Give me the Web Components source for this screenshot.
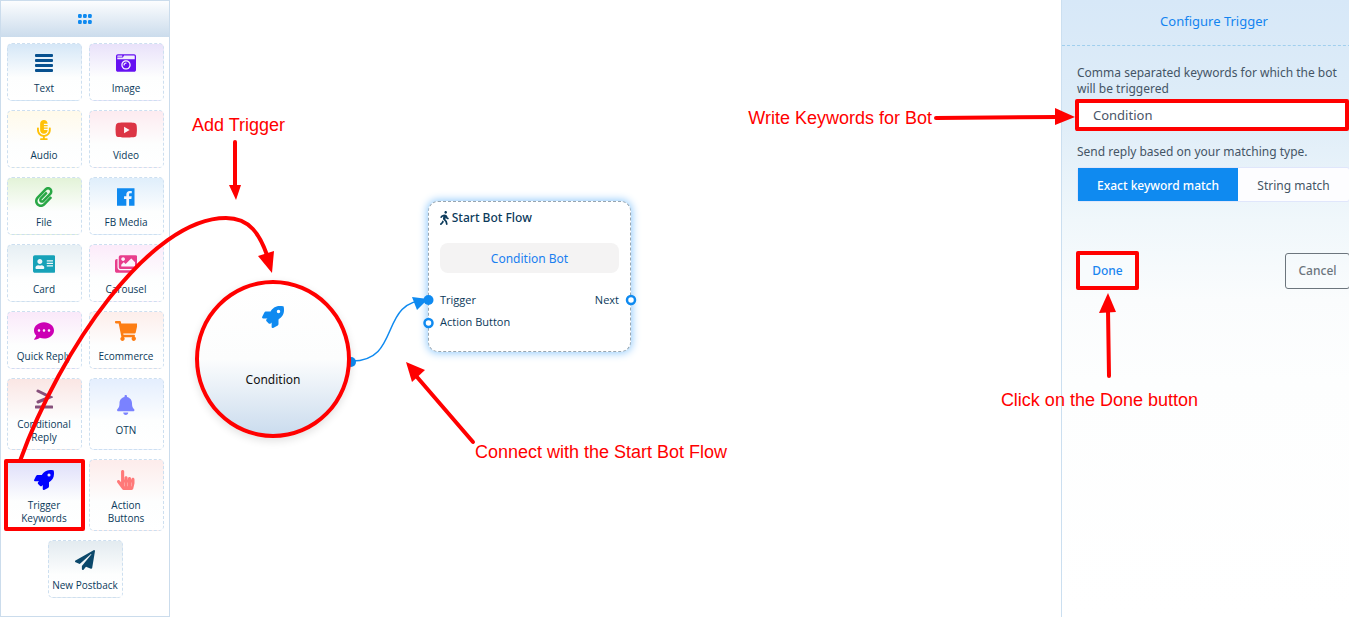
<!DOCTYPE html>
<html lang="en">
<head>
<meta charset="utf-8">
<title>Bot Flow Builder</title>
<style>
  body { margin: 0; background: #fff; font-family: "Noto Sans", "Open Sans", sans-serif; font-size: 12px; color: #0b3a5b; }
</style>
</head>
<body>
<flow-builder></flow-builder>
<script>
const ICONS = {
  grid: ['0 0 44 32', '<rect width="12" height="13" rx="4"/><rect x="16" width="12" height="13" rx="4"/><rect x="32" width="12" height="13" rx="4"/><rect y="19" width="12" height="13" rx="4"/><rect x="16" y="19" width="12" height="13" rx="4"/><rect x="32" y="19" width="12" height="13" rx="4"/>'],
  text: ['0 0 18 20', '<rect y="1" width="18" height="3" rx="1"/><rect y="6" width="18" height="3" rx="1"/><rect y="11" width="18" height="3" rx="1"/><rect y="16" width="18" height="3" rx="1"/>'],
  image: ['0 0 512 512', '<path d="M48 32C21.5 32 0 53.5 0 80v352c0 26.5 21.5 48 48 48h416c26.5 0 48-21.5 48-48V80c0-26.5-21.5-48-48-48H48zm0 32h106c3.3 0 6 2.7 6 6v20c0 3.3-2.7 6-6 6H38c-3.3 0-6-2.7-6-6V80c0-8.8 7.2-16 16-16zm426 96H38c-3.3 0-6-2.7-6-6v-36c0-3.3 2.7-6 6-6h138l30.2-45.3c1.1-1.7 3-2.7 5-2.7H464c8.8 0 16 7.2 16 16v74c0 3.3-2.7 6-6 6zM256 424c-66.2 0-120-53.8-120-120s53.8-120 120-120 120 53.8 120 120-53.8 120-120 120zm0-208c-48.5 0-88 39.5-88 88s39.5 88 88 88 88-39.5 88-88-39.5-88-88-88zm-48 104c-8.8 0-16-7.2-16-16 0-35.3 28.7-64 64-64 8.8 0 16 7.2 16 16s-7.2 16-16 16c-17.6 0-32 14.4-32 32 0 8.8-7.2 16-16 16z"/>'],
  mic: ['0 0 352 512', '<path d="M336 192h-16c-8.84 0-16 7.16-16 16v48c0 74.8-64.49 134.82-140.79 127.38C96.71 376.89 48 317.11 48 250.3V208c0-8.84-7.16-16-16-16H16c-8.84 0-16 7.16-16 16v40.16c0 89.64 63.97 169.55 152 181.69V464H96c-8.84 0-16 7.16-16 16v16c0 8.84 7.16 16 16 16h160c8.84 0 16-7.16 16-16v-16c0-8.84-7.16-16-16-16h-56v-33.77C285.71 418.47 352 344.9 352 256v-48c0-8.84-7.16-16-16-16zM176 352c53.02 0 96-42.98 96-96h-85.33c-5.89 0-10.67-3.58-10.67-8v-16c0-4.42 4.78-8 10.67-8H272v-32h-85.33c-5.89 0-10.67-3.58-10.67-8v-16c0-4.42 4.78-8 10.67-8H272v-32h-85.33c-5.89 0-10.67-3.58-10.67-8v-16c0-4.42 4.78-8 10.67-8H272c0-53.02-42.98-96-96-96S80 42.98 80 96v160c0 53.02 42.98 96 96 96z"/>'],
  video: ['0 0 576 512', '<path d="M549.655 124.083c-6.281-23.65-24.787-42.276-48.284-48.597C458.781 64 288 64 288 64S117.22 64 74.629 75.486c-23.497 6.322-42.003 24.947-48.284 48.597-11.412 42.867-11.412 132.305-11.412 132.305s0 89.438 11.412 132.305c6.281 23.65 24.787 41.5 48.284 47.821C117.22 448 288 448 288 448s170.78 0 213.371-11.486c23.497-6.321 42.003-24.171 48.284-47.821 11.412-42.867 11.412-132.305 11.412-132.305s0-89.438-11.412-132.305zm-317.51 213.508V175.185l142.739 81.205-142.739 81.201z"/>'],
  clip: ['0 0 448 512', '<path d="M43.246 466.142c-58.43-60.289-57.341-157.511 1.386-217.581L254.392 34c44.316-45.332 116.351-45.336 160.671 0 43.89 44.894 43.943 117.329 0 162.276L232.214 383.128c-29.855 30.537-78.633 30.111-107.982-.998-28.275-29.97-27.368-77.473 1.452-106.953l143.743-146.835c6.182-6.314 16.312-6.422 22.626-.241l22.861 22.379c6.315 6.182 6.422 16.312.241 22.626L171.427 319.927c-4.932 5.045-5.236 13.428-.648 18.292 4.372 4.634 11.245 4.711 15.688.165l182.849-186.851c19.613-20.062 19.613-52.725-.011-72.798-19.189-19.627-49.957-19.637-69.154 0L90.39 293.295c-34.763 35.56-35.299 93.12-1.191 128.313 34.01 35.093 88.985 35.137 123.058.286l172.06-175.999c6.177-6.319 16.307-6.433 22.626-.256l22.877 22.364c6.319 6.177 6.434 16.307.256 22.626l-172.06 175.998c-59.576 60.938-155.943 60.216-214.77-.485z"/>'],
  facebook: ['0 0 448 512', '<path d="M448 40v432c0 5-3 8-8 8H309.1V306.5h58.2l8.7-67.6h-67v-43.2c0-19.6 5.4-32.9 33.5-32.9h35.8v-60.5c-6.2-.8-27.4-2.7-52.2-2.7-51.6 0-87 31.5-87 89.4v49.9h-58.4v67.6h58.4V480H8c-5 0-8-3-8-8V40c0-5 3-8 8-8h432c5 0 8 3 8 8z"/>'],
  card: ['0 0 576 512', '<path d="M528 32H48C21.5 32 0 53.5 0 80v352c0 26.5 21.5 48 48 48h480c26.5 0 48-21.5 48-48V80c0-26.5-21.5-48-48-48zm-352 96c35.3 0 64 28.7 64 64s-28.7 64-64 64-64-28.7-64-64 28.7-64 64-64zm112 236.8c0 10.6-10 19.2-22.4 19.2H86.4C74 384 64 375.4 64 364.8v-19.2c0-31.8 30.1-57.6 67.2-57.6h5c12.3 5.1 25.7 8 39.8 8s27.6-2.9 39.8-8h5c37.1 0 67.2 25.8 67.2 57.6v19.2zM512 312c0 4.4-3.6 8-8 8H360c-4.4 0-8-3.6-8-8v-16c0-4.4 3.6-8 8-8h144c4.4 0 8 3.6 8 8v16zm0-64c0 4.4-3.6 8-8 8H360c-4.4 0-8-3.6-8-8v-16c0-4.4 3.6-8 8-8h144c4.4 0 8 3.6 8 8v16zm0-64c0 4.4-3.6 8-8 8H360c-4.4 0-8-3.6-8-8v-16c0-4.4 3.6-8 8-8h144c4.4 0 8 3.6 8 8v16z"/>'],
  images: ['0 0 576 512', '<path d="M480 416v16c0 26.51-21.49 48-48 48H48c-26.51 0-48-21.49-48-48V176c0-26.51 21.49-48 48-48h16v208c0 44.112 35.888 80 80 80h336zm96-80V80c0-26.51-21.49-48-48-48H144c-26.51 0-48 21.49-48 48v256c0 26.51 21.49 48 48 48h384c26.51 0 48-21.49 48-48zM256 128c0 26.51-21.49 48-48 48s-48-21.49-48-48 21.49-48 48-48 48 21.49 48 48zm-96 144l55.515-55.515c4.686-4.686 12.284-4.686 16.971 0L272 256l135.515-135.515c4.686-4.686 12.284-4.686 16.971 0L512 208v112H160v-48z"/>'],
  comment: ['0 0 512 512', '<path d="M256 32C114.6 32 0 125.1 0 240c0 49.6 21.4 95 57 130.7C44.5 421.1 2.7 466 2.2 466.5c-2.2 2.3-2.8 5.7-1.5 8.7S4.8 480 8 480c66.3 0 116-31.8 140.6-51.4 32.7 12.3 69 19.4 107.4 19.4 141.4 0 256-93.1 256-208S397.4 32 256 32zM128 272c-17.7 0-32-14.3-32-32s14.3-32 32-32 32 14.3 32 32-14.3 32-32 32zm128 0c-17.7 0-32-14.3-32-32s14.3-32 32-32 32 14.3 32 32-14.3 32-32 32zm128 0c-17.7 0-32-14.3-32-32s14.3-32 32-32 32 14.3 32 32-14.3 32-32 32z"/>'],
  cart: ['0 0 576 512', '<path d="M528.12 301.319l47.273-208C578.806 78.301 567.391 64 551.99 64H159.208l-9.166-44.81C147.758 8.021 137.93 0 126.529 0H24C10.745 0 0 10.745 0 24v16c0 13.255 10.745 24 24 24h69.883l70.248 343.435C147.325 417.1 136 435.222 136 456c0 30.928 25.072 56 56 56s56-25.072 56-56c0-15.674-6.447-29.835-16.824-40h209.647C430.447 426.165 424 440.326 424 456c0 30.928 25.072 56 56 56s56-25.072 56-56c0-22.172-12.888-41.332-31.579-50.405l5.517-24.276c3.413-15.018-8.002-29.319-23.403-29.319H218.117l-6.545-32h293.145c11.206 0 20.92-7.754 23.403-18.681z"/>'],
  gte: ['0 0 18 20', '<path d="M3 2l12 6-12 5M1 18h16" fill="none" stroke="currentColor" stroke-width="3" stroke-linecap="round"/>'],
  bell: ['0 0 448 512', '<path d="M224 512c35.32 0 63.97-28.65 63.97-64H160.03c0 35.35 28.65 64 63.97 64zm215.39-149.71c-19.32-20.76-55.47-51.99-55.47-154.29 0-77.7-54.48-139.9-127.94-155.16V32c0-17.67-14.32-32-31.98-32s-31.98 14.33-31.98 32v20.84C118.56 68.1 64.08 130.3 64.08 208c0 102.3-36.15 133.53-55.47 154.29-6 6.45-8.66 14.16-8.61 21.71.11 16.4 12.98 32 32.1 32h383.8c19.12 0 32-15.6 32.1-32 .05-7.55-2.61-15.27-8.61-21.71z"/>'],
  rocket: ['0 0 512 512', '<path d="M505.12 19.094c-1.19-5.531-6.658-11-12.207-12.188C460.716 0 435.507 0 410.407 0 307.175 0 245.27 55.203 199.052 128H94.838c-16.348.016-35.557 11.875-42.887 26.484L2.516 253.297A28.4 28.4 0 0 0 0 264a24.009 24.009 0 0 0 24.006 24h103.81l-22.474 22.469c-11.365 11.361-12.996 32.258 0 45.25l50.904 50.906c11.156 11.188 32.156 13.156 45.277 0l22.475-22.469V488a24.009 24.009 0 0 0 24.006 24 28.559 28.559 0 0 0 10.707-2.516l98.728-49.39c14.629-7.297 26.508-26.5 26.508-42.86v-104.437c72.597-46.313 128.035-108.406 128.035-211.094.093-25.203.093-50.406-6.862-82.609zM384.04 168a40 40 0 1 1 40.01-40 40.023 40.023 0 0 1-40.01 40z"/>'],
  pointer: ['0 0 448 512', '<path d="M448 240v96c0 3.084-.356 6.159-1.063 9.162l-32 136C410.686 499.23 394.562 512 376 512H168a40.004 40.004 0 0 1-32.35-16.473l-127.997-176c-12.993-17.866-9.043-42.883 8.822-55.876 17.867-12.994 42.884-9.043 55.877 8.823L104 315.992V40c0-22.091 17.908-40 40-40s40 17.909 40 40v200h8v-40c0-22.091 17.908-40 40-40s40 17.909 40 40v40h8v-24c0-22.091 17.908-40 40-40s40 17.909 40 40v24h8c0-22.091 17.908-40 40-40s40 17.909 40 40zm-256 80h-8v96h8v-96zm88 0h-8v96h8v-96zm88 0h-8v96h8v-96z"/>'],
  plane: ['0 0 512 512', '<path d="M476 3.2L12.5 270.6c-18.1 10.4-15.8 35.6 2.2 43.2L121 358.4l287.3-253.2c5.5-4.9 13.3 2.6 8.6 8.3L176 407v80.5c0 23.6 28.5 32.9 42.5 15.8L282 426l124.6 52.2c14.2 6 30.4-2.9 33-18.2l72-432C515 7.8 493.3-6.8 476 3.2z"/>'],
  walking: ['0 0 320 512', '<path d="M208 96c26.5 0 48-21.5 48-48S234.5 0 208 0s-48 21.5-48 48 21.5 48 48 48zm94.5 149.1l-23.3-11.8-9.7-29.4c-14.7-44.6-55.7-75.8-102.2-75.9-36-.1-55.9 10.1-93.3 25.2-21.6 8.7-39.3 25.2-49.7 46.2L17.6 213c-7.8 15.8-1.5 35 14.2 42.9 15.6 7.9 34.6 1.5 42.5-14.3L81 228c3.5-7 9.3-12.5 16.5-15.4l26.8-10.8-15.2 60.7c-5.2 20.8.4 42.9 14.9 58.8l59.9 65.4c7.2 7.9 12.3 17.4 14.9 27.7l18.3 73.3c4.3 17.1 21.7 27.6 38.8 23.3 17.1-4.3 27.6-21.7 23.3-38.8l-22.2-89c-2.6-10.3-7.7-19.9-14.9-27.7l-45.5-49.7 17.2-68.7 5.5 16.5c5.3 16.1 16.7 29.4 31.7 37l23.3 11.8c15.6 7.9 34.6 1.5 42.5-14.3 7.7-15.7 1.4-35.1-14.3-43zM73.6 385.8c-3.2 8.1-8 15.4-14.2 21.5l-50 50.1c-12.5 12.5-12.5 32.8 0 45.3s32.7 12.5 45.2 0l59.4-59.4c6.1-6.1 10.9-13.4 14.2-21.5l13.5-33.8c-55.3-60.3-38.7-41.8-47.4-53.7l-20.7 51.5z"/>']
};

function define(name, html) {
  customElements.define(name, class extends HTMLElement {
    constructor() {
      super();
      this.attachShadow({ mode: 'open' }).innerHTML = html;
    }
  });
}

customElements.define('flow-icon', class extends HTMLElement {
  connectedCallback() {
    const [box, shapes] = ICONS[this.getAttribute('name')];
    const root = this.shadowRoot || this.attachShadow({ mode: 'open' });
    root.innerHTML = `<style>
      :host { display: flex; justify-content: center; height: 20px; }
      svg { height: 100%; display: block; fill: currentColor; }
    </style><svg viewBox="${box}" aria-hidden="true">${shapes}</svg>`;
  }
});

/* One draggable block type in the palette */
customElements.define('palette-tile', class extends HTMLElement {
  connectedCallback() {
    const root = this.shadowRoot || this.attachShadow({ mode: 'open' });
    root.innerHTML = `<style>
      :host { display: flex; width: 75px; }
      button { flex: 1; display: flex; flex-direction: column; align-items: center; justify-content: center; gap: 9px;
        box-sizing: border-box; min-height: 58px; margin: 0; padding: 9px 0 5px; border: 1px dashed #cddff0; border-radius: 5px;
        background: linear-gradient(var(--tint), #fdfefe 60%, #fff); font: inherit; font-size: 10px; line-height: 13px; color: #0b3a5b; white-space: nowrap; }
      :host([tall]) button { min-height: 72px; }
      :host([marked]) button { margin: 0 -3px; padding: 6px 0 2px; border: 4px solid #f00; border-radius: 2px; }
      flow-icon { color: var(--ink); }
    </style><button type="button"><flow-icon name="${this.getAttribute('icon')}"></flow-icon><span><slot></slot></span></button>`;
  }
});

define('block-palette', `<style>
  :host { display: block; box-sizing: border-box; width: 170px; border: 1px solid #cbdcec; background: #fff; font-family: "Open Sans", "Noto Sans", sans-serif; }
  header { display: flex; align-items: center; justify-content: center; height: 36px; background: linear-gradient(#fcfdfe, #cbdcec); color: #0f8af0; }
  header flow-icon { height: 10px; }
  nav { display: flex; flex-wrap: wrap; justify-content: center; gap: 9px 7px; padding: 6px 0 16px; }
</style>
<header><flow-icon name="grid"></flow-icon></header>
<nav aria-label="Blocks">
  <palette-tile icon="text" style="--tint:#d5e7f7;--ink:#07508f">Text</palette-tile>
  <palette-tile icon="image" style="--tint:#e9e2fa;--ink:#6610f2">Image</palette-tile>
  <palette-tile icon="mic" style="--tint:#fffaea;--ink:#ffc107">Audio</palette-tile>
  <palette-tile icon="video" style="--tint:#fdebf0;--ink:#dc3545">Video</palette-tile>
  <palette-tile icon="clip" style="--tint:#e3f3d8;--ink:#28a745">File</palette-tile>
  <palette-tile icon="facebook" style="--tint:#dfeefb;--ink:#0f8af0">FB Media</palette-tile>
  <palette-tile icon="card" style="--tint:#e6eff4;--ink:#17a2b8">Card</palette-tile>
  <palette-tile icon="images" style="--tint:#fcebfa;--ink:#e83e8c">Carousel</palette-tile>
  <palette-tile icon="comment" style="--tint:#fae9fa;--ink:#cc00b4">Quick Reply</palette-tile>
  <palette-tile icon="cart" style="--tint:#fdeeeb;--ink:#fd7e14">Ecommerce</palette-tile>
  <palette-tile tall icon="gte" style="--tint:#fae6e4;--ink:#87507b">Conditional<br>Reply</palette-tile>
  <palette-tile tall icon="bell" style="--tint:#e4eefe;--ink:#7a82ff">OTN</palette-tile>
  <palette-tile tall marked icon="rocket" style="--tint:#e0e0fa;--ink:#0000ff">Trigger<br>Keywords</palette-tile>
  <palette-tile tall icon="pointer" style="--tint:#fdeceb;--ink:#ff7979">Action<br>Buttons</palette-tile>
  <palette-tile icon="plane" style="--tint:#e3ebf0;--ink:#0b486b">New Postback</palette-tile>
</nav>`);

define('trigger-node', `<style>
  :host { display: flex; flex-direction: column; align-items: center; box-sizing: border-box; width: 156px; height: 158px;
    padding-top: 22px; border: 4px solid #f00; border-radius: 50%; background: linear-gradient(#fff, #fcfdfd 50%, #cbdcee);
    box-shadow: 0 3px 8px rgba(0,0,0,.12); color: #111; line-height: 18px; }
  flow-icon { height: 22px; margin-bottom: 43px; color: #0f8af0; }
</style><flow-icon name="rocket"></flow-icon><span><slot></slot></span>`);

define('start-node', `<style>
  :host { display: block; box-sizing: border-box; width: 203px; height: 151px; padding: 6px 11px; border: 1px dashed #98a6b0;
    border-radius: 10px; background: #fff; box-shadow: 0 0 8px 1px #8fc9fb; color: #0b3a5b; }
  h2 { display: flex; align-items: center; gap: 3px; margin: 0 0 15px; font-size: 12px; line-height: 20px; font-weight: 500; }
  h2 flow-icon { height: 14px; }
  .name { height: 30px; margin-bottom: 16px; border-radius: 8px; background: #f4f3f3; color: #1a7ff0; line-height: 32px; text-align: center; }
  .row { display: flex; justify-content: space-between; font-family: "Open Sans", "Noto Sans", sans-serif; font-size: 11px; line-height: 22px; }
</style>
<h2><flow-icon name="walking"></flow-icon>Start Bot Flow</h2>
<div class="name">Condition Bot</div>
<div class="row"><span>Trigger</span><span>Next</span></div>
<div class="row"><span>Action Button</span></div>`);

/* Free canvas: nodes sit at their own places, links are drawn between the ports */
define('flow-canvas', `<style>
  :host { display: block; position: relative; }
  trigger-node, start-node, svg { position: absolute; }
  trigger-node { left: 25px; top: 280px; }
  start-node { left: 258px; top: 201px; }
  svg { left: 0; top: 0; width: 480px; height: 460px; }
</style>
<start-node></start-node>
<svg viewBox="170 0 480 460" fill="none" stroke="#0f8af0" aria-hidden="true">
  <path d="M352 361C402 361 378 300 428 300" stroke-width="1.5"/>
  <path d="M412 297l16 2-11 11z" fill="#0f8af0" stroke="none"/>
  <circle cx="351" cy="362" r="5" fill="#0f8af0" stroke="none"/>
  <circle cx="428.500" cy="300" r="5" fill="#0f8af0" stroke="none"/>
  <circle cx="428.500" cy="323" r="4" fill="#fff" stroke-width="2.500"/>
  <circle cx="631" cy="300" r="4" fill="#fff" stroke-width="2.500"/>
</svg>
<trigger-node>Condition</trigger-node>`);

define('config-panel', `<style>
  :host { display: block; overflow: hidden; box-sizing: border-box; border-left: 1px solid #cbdff0;
    background: linear-gradient(#d7e8f8, #dfedf8 120px, #f0f7fb 220px, #fafcfd 300px, #fdfefe 380px, #fff); }
  .inner { width: 304px; color: #445566; }
  h1 { margin: 0; border-bottom: 1px dashed #a0cfee; font-size: 13px; font-weight: 400; line-height: 43px; padding-bottom: 2px; text-align: center; color: #1384f0; }
  form { padding: 19px 16px 19px 15px; }
  label.text, legend { display: block; padding: 0; font-size: 12px; line-height: 16px; }
  input[type=text] { display: block; box-sizing: border-box; width: 274px; height: 32px; margin: 2px 0 13px -2px; padding: 0 14px;
    border: 4px solid #f00; border-radius: 2px; background: #fff; font: inherit; font-size: 13px; color: #4a5568; outline: 0; }
  fieldset { margin: 0 0 49px; padding: 0; border: 0; }
  .segments { display: flex; margin-top: 7px; border: 1px solid #e0e6fb; border-radius: 3px; background: #fdfdff; }
  .segments label { flex: 0 0 160px; line-height: 35px; height: 33px; text-align: center; }
  .segments label + label { flex: 1; }
  .segments label:has(:checked) { background: #0f8af0; color: #fff; font-weight: 500; }
  input[type=radio] { position: absolute; opacity: 0; margin: 0; }
  .actions { display: flex; justify-content: space-between; align-items: center; margin-left: -1px; }
  button { box-sizing: border-box; height: 36px; width: 65px; padding: 0; border: 1px solid #6c757d; border-radius: 3px; background: none;
    font: inherit; font-size: 12px; font-weight: 500; color: #6c757d; }
  button.done { height: 39px; width: 63px; border: 4px solid #f00; border-radius: 2px; background: #f8fbfd; color: #1a85f0; }
</style>
<div class="inner">
  <h1>Configure Trigger</h1>
  <form>
    <label class="text" for="keywords">Comma separated keywords for which the bot will be triggered</label>
    <input type="text" id="keywords" value="Condition">
    <fieldset>
      <legend>Send reply based on your matching type.</legend>
      <div class="segments">
        <label><input type="radio" name="match" checked>Exact keyword match</label>
        <label><input type="radio" name="match">String match</label>
      </div>
    </fieldset>
    <div class="actions"><button type="button" class="done">Done</button><button type="button">Cancel</button></div>
  </form>
</div>`);

/* Tutorial notes over the page; the right-hand ones keep to the panel's side */
define('tour-notes', `<style>
  :host { position: absolute; inset: 0; overflow: hidden; pointer-events: none; color: #f00;
    font: 18px/20px "Liberation Sans", Arial, sans-serif; white-space: nowrap; }
  svg, span { position: absolute; }
  svg { top: 0; height: 617px; fill: #f00; }
  .left { left: 0; width: 600px; }
  .right { right: 0; width: 449px; }
  .line { fill: none; stroke: #f00; stroke-width: 4; stroke-linecap: round; }
</style>
<svg class="left" viewBox="0 0 600 617" aria-hidden="true">
  <path class="line" d="M20 461C60 350 150 218 226 218C250 218 260 235 267 255"/>
  <path d="M258 256l16-5-2 22z"/>
  <path class="line" d="M235 142v46"/><path d="M229 185h12l-5 15z"/>
  <path class="line" d="M473 442L417 377"/><path d="M406 362l19 8-13 12z"/>
</svg>
<svg class="right" viewBox="900 0 449 617" aria-hidden="true">
  <path class="line" d="M936 118l122-1"/><path d="M1055 108l20 9-20 8z"/>
  <path class="line" d="M1109 376l-1-66"/><path d="M1108 293l8 19-17 1z"/>
</svg>
<span style="left:192px;top:115px">Add Trigger</span>
<span style="left:475px;top:442px">Connect with the Start Bot Flow</span>
<span style="right:417px;top:108px">Write Keywords for Bot</span>
<span style="right:151px;top:390px">Click on the Done button</span>`);

define('flow-builder', `<style>
  :host { position: relative; display: grid; grid-template-columns: auto 1fr 288px; min-height: 100vh; }
</style>
<block-palette></block-palette>
<flow-canvas></flow-canvas>
<config-panel></config-panel>
<tour-notes></tour-notes>`);
</script>
</body>
</html>
